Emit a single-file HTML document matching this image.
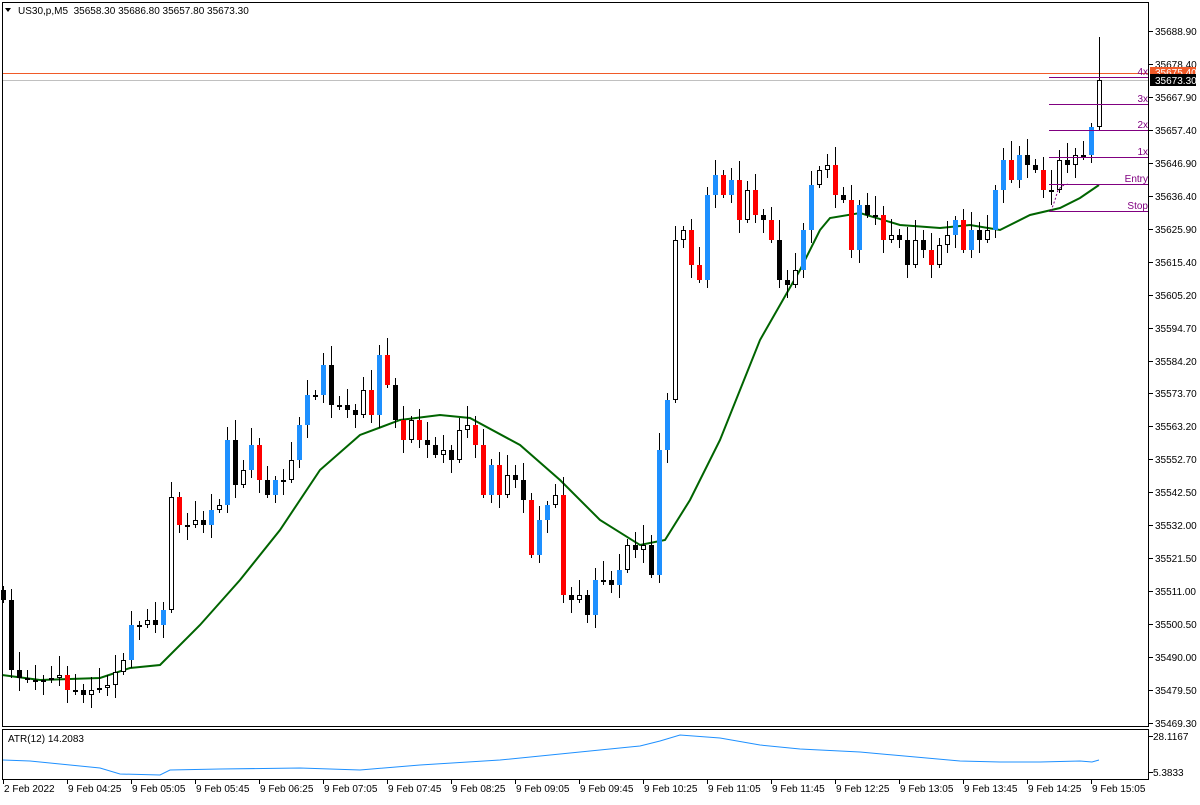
<!DOCTYPE html>
<html><head><meta charset="utf-8"><style>
body{margin:0;background:#fff;width:1200px;height:800px;overflow:hidden;font-family:"Liberation Sans",sans-serif}
svg text{font-family:"Liberation Sans",sans-serif;font-size:10px}
</style></head><body>
<svg id="s" width="1200" height="800" xmlns="http://www.w3.org/2000/svg">
<rect x="0" y="0" width="1200" height="800" fill="#fff"/>
<g id="c"></g>
<rect x="2.5" y="2.5" width="1146" height="724" fill="none" stroke="#000"/>
<rect x="2.5" y="729.5" width="1146" height="50" fill="none" stroke="#000"/>
<text x="18" y="14" font-size="10">US30,p,M5&#160;&#160;35658.30 35686.80 35657.80 35673.30</text>
<path d="M5 8 L11 8 L8 12 Z" fill="#000"/>
<text x="8" y="742">ATR(12) 14.2083</text>
</svg>
<script>
(function(){
var S='http://www.w3.org/2000/svg',g=document.getElementById('c');
function el(t,a,txt){var e=document.createElementNS(S,t);for(var k in a)e.setAttribute(k,a[k]);if(txt)e.textContent=txt;g.appendChild(e);return e;}
var pl=["35688.90","35678.40","35667.90","35657.40","35646.90","35636.40","35625.90","35615.40","35605.20","35594.70","35584.20","35573.70","35563.20","35552.70","35542.50","35532.00","35521.50","35511.00","35500.50","35490.00","35479.50","35469.30"];
for(var i=0;i<pl.length;i++){var y=Math.round(31+i*32.95);el('line',{x1:1149,y1:y+.5,x2:1153,y2:y+.5,stroke:'#000'});el('text',{x:1155,y:y+4},pl[i]);}
el('text',{x:1153,y:740},"28.1167");el('text',{x:1153,y:776},"5.3833");
el('line',{x1:1149,y1:736.5,x2:1153,y2:736.5,stroke:'#000'});el('line',{x1:1149,y1:772.5,x2:1153,y2:772.5,stroke:'#000'});
var tl=["2 Feb 2022","9 Feb 04:25","9 Feb 05:05","9 Feb 05:45","9 Feb 06:25","9 Feb 07:05","9 Feb 07:45","9 Feb 08:25","9 Feb 09:05","9 Feb 09:45","9 Feb 10:25","9 Feb 11:05","9 Feb 11:45","9 Feb 12:25","9 Feb 13:05","9 Feb 13:45","9 Feb 14:25","9 Feb 15:05"];
for(var i=0;i<tl.length;i++){var x=3+64*i;el('line',{x1:x+.5,y1:780,x2:x+.5,y2:784,stroke:'#000'});el('text',{x:x+1,y:792},tl[i]);}
el('line',{x1:2,y1:73.5,x2:1149,y2:73.5,stroke:'#f05a28'});
el('line',{x1:2,y1:80.5,x2:1149,y2:80.5,stroke:'#c0c0c0'});
var ma=[[2,675],[40,680],[100,678],[130,668],[160,665],[200,625],[240,580],[280,530],[320,470],[360,435],[400,420],[440,415],[470,418],[520,445],[560,480],[600,520],[640,545],[665,540],[690,500],[720,440],[760,340],[800,270],[820,230],[830,218],[860,213],[900,225],[940,228],[970,225],[1000,230],[1030,215],[1060,208],[1080,198],[1099,185]];
el('polyline',{points:ma.map(function(p){return p.join(',')}).join(' '),fill:'none',stroke:'#006400','stroke-width':2});
var cl=[600,670,678,680,680,680,678,675,690,690,695,690,688,685,672,660,625,625,620,625,610,497,525,525,520,525,510,505,440,485,470,445,480,495,480,480,460,425,395,395,365,405,405,410,415,390,415,355,385,420,440,420,440,445,455,450,460,430,425,445,495,465,495,475,480,500,555,520,505,495,595,600,595,615,580,580,585,570,545,550,545,575,450,400,240,230,265,280,195,175,195,180,220,190,215,220,240,280,285,270,230,185,170,165,195,200,250,205,215,215,240,235,240,265,240,250,265,245,235,220,250,230,240,230,190,160,180,155,165,170,190,190,160,165,155,155,127,80];
var prev=590;
for(var i=0;i<cl.length;i++){
 var x=3+8*i,o=prev,c=cl[i];
 if(i==cl.length-1){o=127;}
 var bt=Math.min(o,c),bb=Math.max(o,c);if(bb-bt<2)bb=bt+2;
 var hi=bt-(4+(i*7)%17),lo=bb+(3+(i*5)%15);
 if(i==cl.length-1){hi=37;lo=130;}
 var bull=c<o,big=(bb-bt)>14;
 var fill=bull?(big&&i%3!=0?'#1e90ff':'#fff'):(big&&i%4!=1?'#ff0000':'#000');
 if(i==cl.length-1)fill='#fff';
 el('line',{x1:x+.5,y1:hi,x2:x+.5,y2:lo,stroke:'#000'});
 if(fill=='#fff'||fill=='#000') el('rect',{x:x-1.5,y:bt+.5,width:4,height:bb-bt-1,fill:fill,stroke:'#000'});
 else el('rect',{x:x-2,y:bt,width:5,height:bb-bt,fill:fill});
 prev=c;
}
var lv=[["4x",77],["3x",104],["2x",130],["1x",157],["Entry",184],["Stop",211]];
lv.forEach(function(l){el('line',{x1:1049,y1:l[1]+.5,x2:1149,y2:l[1]+.5,stroke:'#800080'});el('text',{x:1148,y:l[1]-2,'text-anchor':'end',fill:'#800080'},l[0]);});
el('polyline',{points:'1051,211 1055,200 1058,190 1062,186 1068,184',fill:'none',stroke:'#800080','stroke-dasharray':'2,2'});
el('rect',{x:1150,y:67,width:46,height:11,fill:'#f05a28'});el('text',{x:1155,y:76,fill:'#fff'},"35675.40");
el('rect',{x:1150,y:74,width:46,height:12,fill:'#000'});el('text',{x:1155,y:84,fill:'#fff'},"35673.30");
var atr=[[3,760],[30,761],[60,764],[100,768],[120,774],[160,775],[170,770],[220,769],[300,768],[360,770],[420,765],[500,760],[580,752],[640,746],[660,741],[680,735],[720,738],[760,745],[800,749],[860,752],[960,761],[1000,762],[1040,762],[1080,761],[1092,762],[1099,760]];
el('polyline',{points:atr.map(function(p){return p.join(',')}).join(' '),fill:'none',stroke:'#1e90ff','stroke-width':1});
})();
</script>
</body></html>
